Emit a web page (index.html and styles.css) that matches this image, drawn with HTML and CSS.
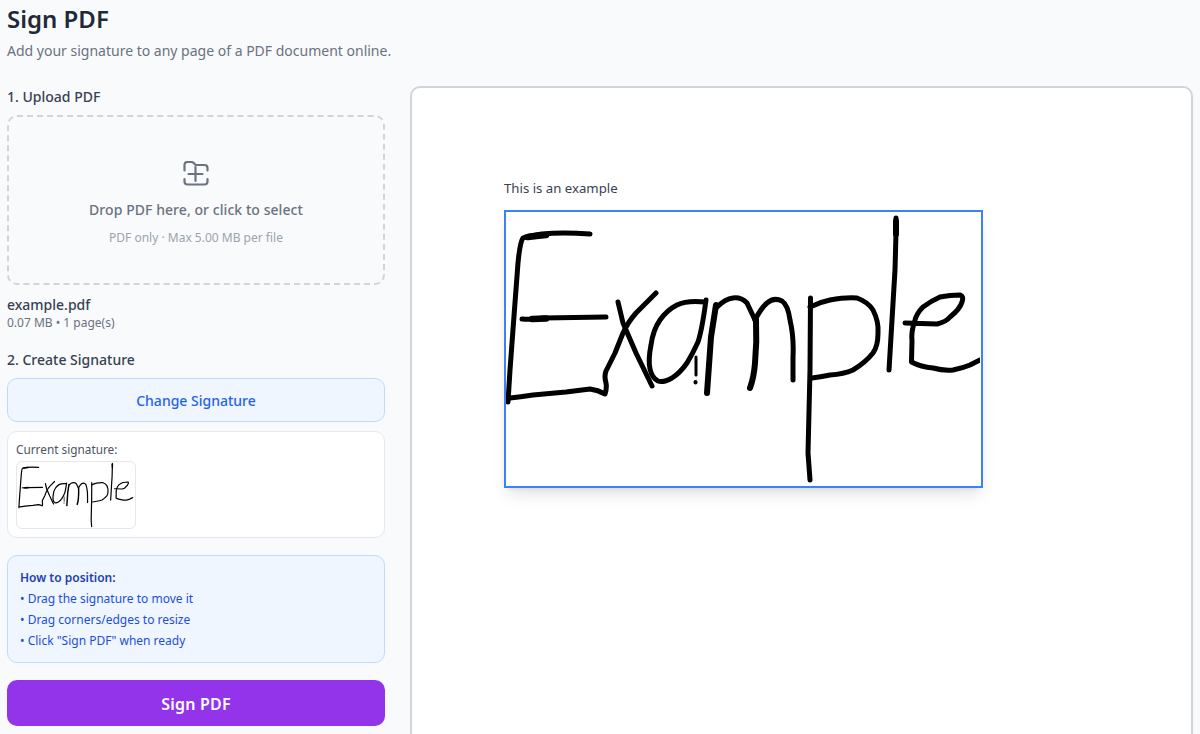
FILE: index.html
```html
<!DOCTYPE html>
<html lang="en">
  <head>
    <meta charset="UTF-8" />
    <meta name="viewport" content="width=device-width, initial-scale=1.0" />
    <title>Sign PDF</title>
    <link rel="stylesheet" href="styles.css">
  </head>
  <body>
    <svg class="defs" width="0" height="0">
      <symbol id="signature" viewBox="0 0 474 274">
        <g fill="none" stroke="#000" stroke-width="5" stroke-linecap="round" stroke-linejoin="round">
          <!-- E -->
          <path d="M84 22 Q56 20 36 22 Q22 24 17 26 Q14 30 12 51 L8 104 L4 158 L2 190" />
          <path d="M22 25 Q30 24 40 23" stroke-width="6.500" />
          <path d="M4 186 Q14 185 27 183 L60 180 L84 177 Q92 178 99 182 Q101 176 100 171 Q98 164 100 159 L109 141 L117 121 Q122 110 130 101 L150 81" />
          <path d="M16 107 Q26 108 37 106 L100 105" />
          <path d="M26 107 L40 106.500" stroke-width="6.500" />
          <!-- x -->
          <path d="M112 90 L117 111 L130 141 L146 174" />
          <!-- a -->
          <path d="M199 90 Q181 88 171 93 Q161 98 154 108 Q147 118 145 133 Q142 148 144 157 Q146 166 152 169 Q157 171 166 166 Q174 161 181 151 Q187 141 192 130 Q196 118 200 88" />
          <path d="M190 145 L190 163" stroke-width="3" />
          <path d="M189.500 170 L189.500 170.500" stroke-width="4" />
          <!-- m -->
          <path d="M210 93 L205 125 L201 181" stroke-width="6" />
          <path d="M211 95 Q219 87 227 86 Q235 85 241 91 L249 108" />
          <path d="M250 108 Q251 130 249 151 Q248 165 244 176" stroke-width="6" />
          <path d="M249 108 Q255 96 261 91 Q268 85 276 89 Q282 93 284 108 Q288 125 287 145 L287 168" />
          <!-- p -->
          <path d="M304.500 86 L304 158 L302 241 Q303 255 304 268" />
          <path d="M304 95 Q314 90 324 88 Q340 85 351 86 Q362 90 367 98 Q373 110 372 121 Q372 134 367 141 Q360 150 347 158 Q338 162 324 163 Q314 165 306 166" />
          <!-- l -->
          <path d="M390 6 L390 21 L389 58 L386 108 L383 158" />
          <path d="M390 9 L390 22" stroke-width="6" />
          <!-- e -->
          <path d="M399 111 L431 112 Q440 110 444 105 Q454 97 456 90 Q458 84 454 83 Q444 83 434 85 Q425 89 417 95 Q411 101 409 108 Q405 120 406 128 L405.500 150 Q415 155 427 156 Q438 159 447 158 Q457 156 464 153 L474 148" />
        </g>
      </symbol>
    </svg>

    <header class="page-head">
      <h1>Sign PDF</h1>
      <p>Add your signature to any page of a PDF document online.</p>
    </header>

    <main class="layout">
      <section class="sidebar">
        <h2>1. Upload PDF</h2>
        <div class="dropzone">
          <svg class="upload-icon" width="26" height="25" viewBox="0 0 26 25" fill="none" stroke="#6b7280" stroke-width="2.200" stroke-linecap="round" stroke-linejoin="round">
            <path d="M1.500 9.500 V4 Q1.500 1 4.500 1 H8.500 Q10.500 1 12.500 4 H21.500 Q24.500 4 24.500 7 V9.500" />
            <path d="M1.500 18 V20.500 Q1.500 23.500 4.500 23.500 H21.500 Q24.500 23.500 24.500 20.500 V18" />
            <path d="M5.500 13 H19.500 M12.500 6 V20" />
          </svg>
          <p class="drop-title">Drop PDF here, or click to select</p>
          <p class="drop-hint">PDF only · Max 5.00 MB per file</p>
        </div>

        <div class="file-info">
          <p class="file-name">example.pdf</p>
          <p class="file-meta">0.07 MB • 1 page(s)</p>
        </div>

        <h2>2. Create Signature</h2>
        <button class="change-btn">Change Signature</button>
        <div class="current-sig">
          <p>Current signature:</p>
          <div class="sig-thumb">
            <svg class="thumb-art" width="117" height="66"><use href="#signature" /></svg>
          </div>
        </div>

        <div class="howto">
          <p class="howto-title">How to position:</p>
          <p>• Drag the signature to move it</p>
          <p>• Drag corners/edges to resize</p>
          <p>• Click "Sign PDF" when ready</p>
        </div>

        <button class="sign-btn">Sign PDF</button>
      </section>

      <section class="viewer">
        <p class="pdf-text">This is an example</p>
        <div class="sig-box">
          <svg class="sig-art" width="474" height="274"><use href="#signature" /></svg>
        </div>
      </section>
    </main>
  </body>
</html>
```

FILE: styles.css
```css
html,
body {
  margin: 0;
  padding: 0;
  height: 100%;
  overflow: hidden;
  background: #f8fafc;
  color: #1f2937;
  font-family: "Noto Sans", sans-serif;
}

h1,
h2,
p {
  margin: 0;
}

.defs {
  position: absolute;
}

.page-head {
  padding: 2px 7px 0;
}

.page-head h1 {
  font-size: 24px;
  line-height: 34px;
  font-weight: 600;
}

.page-head p {
  margin-top: 5px;
  font-size: 14px;
  line-height: 20px;
  color: #6b7280;
}

.layout {
  display: grid;
  grid-template-columns: 378px 783px;
  gap: 25px;
  margin-top: 25px;
  padding: 0 7px;
}

.sidebar {
  padding-top: 1px;
}

.sidebar h2 {
  font-size: 14px;
  line-height: 20px;
  font-weight: 500;
  color: #374151;
  margin-bottom: 8px;
}

.dropzone {
  height: 170px;
  box-sizing: border-box;
  padding-top: 44px;
  border: 2px dashed #d1d5db;
  border-radius: 10px;
  display: flex;
  flex-direction: column;
  align-items: center;
}

.drop-title {
  margin-top: 14px;
  font-size: 14px;
  line-height: 20px;
  font-weight: 500;
  letter-spacing: 0.06px;
  color: #6b7280;
}

.drop-hint {
  margin-top: 10px;
  font-size: 12px;
  line-height: 16px;
  color: #9ca3af;
}

.file-info {
  margin: 10px 0 19px;
}

.file-name {
  font-size: 14px;
  line-height: 20px;
  font-weight: 500;
  color: #374151;
}

.file-meta {
  font-size: 12px;
  line-height: 16px;
  color: #6b7280;
}

.change-btn {
  display: block;
  width: 100%;
  height: 44px;
  padding: 1px 0 0;
  background: #eff6ff;
  border: 1px solid #bfdbfe;
  border-radius: 10px;
  color: #2563eb;
  font: 500 14px "Noto Sans", sans-serif;
}

.current-sig {
  height: 107px;
  box-sizing: border-box;
  margin-top: 9px;
  padding: 8px 8px;
  background: #fff;
  border: 1px solid #e5e7eb;
  border-radius: 10px;
}

.current-sig p {
  font-size: 11.800px;
  line-height: 18px;
  color: #4b5563;
}

.sig-thumb {
  width: 120px;
  height: 68px;
  box-sizing: border-box;
  margin-top: 3px;
  border: 1px solid #e5e7eb;
  border-radius: 6px;
  background: #fff;
}

.thumb-art {
  display: block;
}

.howto {
  height: 108px;
  box-sizing: border-box;
  margin-top: 17px;
  padding: 11px 12px;
  background: #eff6ff;
  border: 1px solid #bfdbfe;
  border-radius: 10px;
  color: #1d4ed8;
  font-size: 12px;
  line-height: 21px;
}

.howto-title {
  font-weight: 600;
  color: #1e40af;
}

.sign-btn {
  display: block;
  width: 100%;
  height: 46px;
  padding: 2px 0 0;
  margin-top: 17px;
  background: #9333ea;
  border: none;
  border-radius: 10px;
  color: #fff;
  font: 600 16px "Noto Sans", sans-serif;
  letter-spacing: 0.2px;
}

.viewer {
  height: 800px;
  box-sizing: border-box;
  padding: 91px 92px 0;
  background: #fff;
  border: 2px solid #d1d5db;
  border-radius: 10px;
}

.pdf-text {
  font-size: 13.200px;
  line-height: 18px;
  color: #374151;
}

.sig-box {
  width: 479px;
  height: 278px;
  box-sizing: border-box;
  margin-top: 13px;
  border: 2px solid #3b82f6;
  background: #fff;
  box-shadow: 0 10px 15px -3px rgba(0, 0, 0, 0.1), 0 4px 6px -4px rgba(0, 0, 0, 0.1);
}

.sig-art {
  display: block;
}
```
